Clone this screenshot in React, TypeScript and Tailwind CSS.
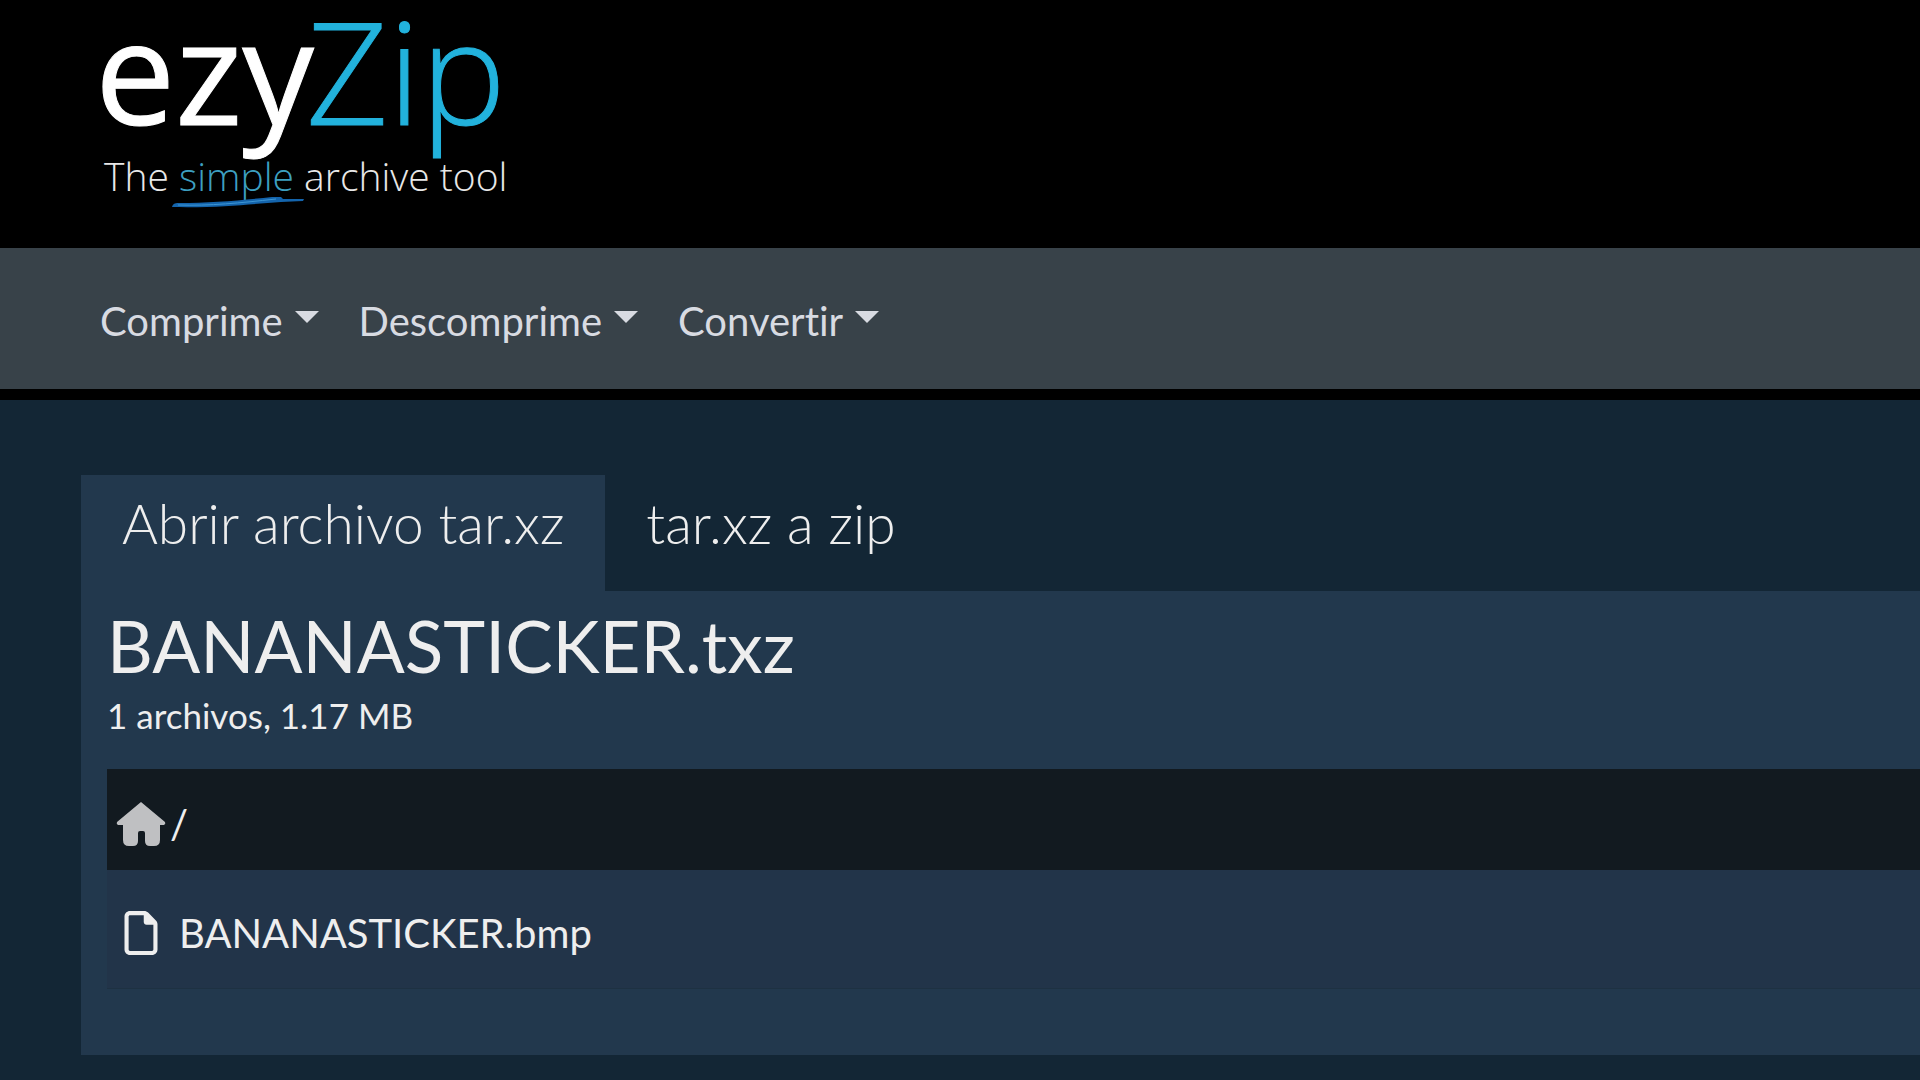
import React from 'react';
import { FaRegFile } from 'react-icons/fa6';

const menus = ['Comprime', 'Descomprime', 'Convertir'];

const tabs = [
  { label: 'Abrir archivo tar.xz', active: true },
  { label: 'tar.xz a zip', active: false },
];

const files = ['BANANASTICKER.bmp'];

const Logo = () => (
  <svg width="440" height="212" viewBox="-20 0 440 212" role="img" aria-label="ezyZip">
    <g fontFamily="'Open Sans', 'Noto Sans', sans-serif">
      <text x="-5" y="125" fontSize="143" fontWeight="400" fill="#ffffff" stroke="#ffffff" strokeWidth="1">
        ezy
      </text>
      <text x="206" y="125" fontSize="143" fontWeight="300" fill="#22b2dc" stroke="#22b2dc" strokeWidth="1">
        Zip
      </text>
      <text x="4" y="191" fontSize="39" fontWeight="300" fill="#e8e8e8">
        The <tspan fill="#3d9fc0">simple</tspan> archive tool
      </text>
    </g>
    {/* brush stroke under "simple" */}
    <path
      d="M72 207 C73 203 76 203 80 203 C110 203 145 200 172 197 L181 197 L183 199 L204 199 L203 201 L181 202 C150 204 120 208 72 207 Z"
      fill="#1464ac"
    />
    <path d="M78 205 C110 206 140 203 176 199" stroke="#3d96d4" strokeWidth="1" fill="none" />
  </svg>
);

const HomeIcon = () => (
  <svg width="50" height="46" viewBox="0 0 50 46" fill="#bfc0c2" aria-hidden="true">
    <path d="M25 1 L49 21 Q50 23 48 24 L44 24 V39 Q44 45 38 45 H34 Q29 45 29 40 V32 Q29 30 27 30 H24 Q22 30 22 32 V40 Q22 45 17 45 H13 Q7 45 7 39 V24 L2 24 Q0 23 1 21 Z" />
  </svg>
);

const App = () => {
  return (
    <div className="flex min-h-screen flex-col overflow-x-hidden bg-[#132635] font-['Lato',sans-serif] text-[40px] leading-[60px] text-[#eeeeee] [font-variant-ligatures:none]">
      {/* Header */}
      <header className="bg-black px-20 pb-9">
        <a href="#" className="block w-fit">
          <Logo />
        </a>
      </header>

      {/* Main menu */}
      <nav className="flex h-[152px] items-center border-b-[11px] border-black bg-[#384249] px-20">
        {menus.map((menu) => (
          <button key={menu} type="button" className="flex items-center gap-3 px-5 pt-1 text-[#d8dbe2]">
            {menu}
            <span className="mb-2 border-x-[12px] border-t-[12px] border-x-transparent border-t-[#d8dbe2]" />
          </button>
        ))}
      </nav>

      <main className="pt-[75px] pb-6 pl-[81px]">
        {/* Tabs */}
        <div role="tablist" className="flex">
          {tabs.map((tab) => (
            <button
              key={tab.label}
              type="button"
              role="tab"
              aria-selected={tab.active}
              className={`px-[41px] pt-1 pb-6 text-[55px] leading-[88px] font-light ${tab.active ? 'bg-[#22384d]' : ''}`}
            >
              {tab.label}
            </button>
          ))}
        </div>

        {/* Archive contents */}
        <section className="bg-[#22384d] pt-4 pb-[66px] pl-[26px]">
          <h1 className="text-[71px] leading-[78px]">BANANASTICKER.txz</h1>
          <p className="pb-6 text-[35px]">1 archivos, 1.17 MB</p>

          <div className="flex h-[101px] items-center gap-1 bg-[#121a20] pt-2 pl-[9px]">
            <a href="#" aria-label="Inicio">
              <HomeIcon />
            </a>
            <span>/</span>
          </div>

          <table className="w-full bg-[#223449]">
            <tbody>
              {files.map((file) => (
                <tr key={file} className="h-[118px] border-b border-[#1e3142]">
                  <td className="pt-2 pr-5 pl-3">
                    <a href="#" className="flex items-center gap-4">
                      <FaRegFile size={44} className="shrink-0" />
                      {file}
                    </a>
                  </td>
                </tr>
              ))}
            </tbody>
          </table>
        </section>
      </main>
    </div>
  );
};

export default App;
